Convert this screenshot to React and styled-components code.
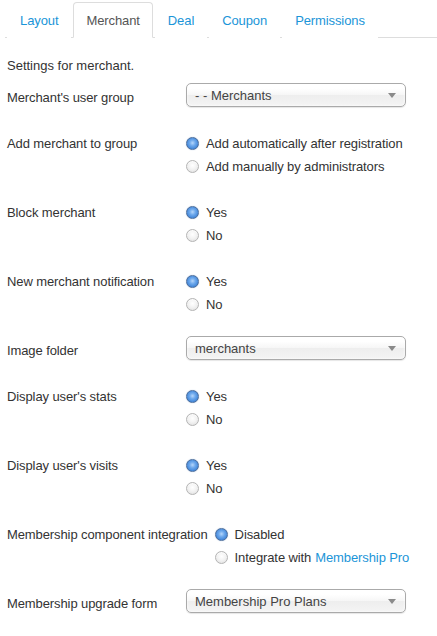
import React from "react";
import styled, { createGlobalStyle } from "styled-components";

const Global = createGlobalStyle`
  html, body { margin: 0; padding: 0; background: #fff; }
  body {
    font-family: "Liberation Sans", Arial, Helvetica, sans-serif;
    font-size: 13px;
    color: #333;
  }
`;

const Page = styled.div`
  width: 437px;
  overflow: hidden;
`;

const Tabs = styled.ul`
  display: flex;
  list-style: none;
  margin: 2px 0 0 5px;
  padding: 0 0 0 2px;
  border-bottom: 1px solid #ddd;
`;

const TabItem = styled.li`
  margin: 0 2px -1px 0;
`;

const TabLink = styled.a`
  display: block;
  padding: 9px 12px 7px;
  line-height: 18px;
  border: 1px solid ${(p) => (p.$active ? "#ddd" : "transparent")};
  border-bottom-color: ${(p) => (p.$active ? "#fff" : "transparent")};
  border-radius: 4px 4px 0 0;
  background: #fff;
  color: ${(p) => (p.$active ? "#555" : "#1b95d8")};
  text-decoration: none;
  letter-spacing: -0.1px;
  cursor: pointer;
`;

const Content = styled.div`
  padding: 16px 0 0 7px;
`;

const Intro = styled.p`
  margin: 0 0 9px;
  line-height: 23px;
`;

const Row = styled.div`
  display: flex;
  align-items: flex-start;
  margin-bottom: 23px;
`;

const Label = styled.div`
  flex: 0 0 auto;
  min-width: 172px;
  padding-right: 7px;
  line-height: 23px;
  white-space: nowrap;
  letter-spacing: -0.1px;
`;

const Controls = styled.div`
  display: flex;
  flex-direction: column;
`;

const SelectBox = styled.div`
  box-sizing: border-box;
  width: 220px;
  height: 24px;
  margin-top: -3px;
  display: flex;
  align-items: center;
  justify-content: space-between;
  padding: 2px 9px 0 8px;
  border: 1px solid #aaa;
  border-radius: 5px;
  background: linear-gradient(#fff 20%, #f6f6f6 50%, #eee 52%, #f4f4f4 100%);
  box-shadow: inset 0 0 3px #fff, 0 1px 1px rgba(0, 0, 0, 0.1);
  color: #444;
  line-height: 20px;
`;

const Caret = styled.span`
  width: 0;
  height: 0;
  margin-top: -2px;
  border-left: 4px solid transparent;
  border-right: 4px solid transparent;
  border-top: 5px solid #8a8a8a;
`;

const Option = styled.label`
  display: flex;
  align-items: center;
  line-height: 23px;
  height: 23px;
  letter-spacing: -0.1px;
`;

const RadioDot = styled.span`
  box-sizing: border-box;
  width: 13px;
  height: 13px;
  border-radius: 50%;
  margin-right: 7px;
  flex: 0 0 auto;
  border: 1px solid ${(p) => (p.$checked ? "#4c6e9c" : "#b4b4b4")};
  background: ${(p) =>
    p.$checked
      ? "radial-gradient(circle at 50% 45%, #b5d6fb 0%, #6ea9ec 35%, #3f84d8 75%, #2f6bbd 100%)"
      : "radial-gradient(circle at 50% 40%, #ffffff 0%, #f3f3f3 45%, #dcdcdc 100%)"};
  box-shadow: ${(p) =>
    p.$checked ? "0 0 1px rgba(60,110,180,0.5)" : "inset 0 1px 1px rgba(255,255,255,0.8)"};
`;

const Link = styled.a`
  color: #1b95d8;
  text-decoration: none;
  margin-left: 4px;
`;

const Select = ({ value }) => (
  <SelectBox>
    <span>{value}</span>
    <Caret />
  </SelectBox>
);

const Radios = ({ options }) => (
  <Controls>
    {options.map((o, i) => (
      <Option key={i}>
        <RadioDot $checked={i === 0} />
        {o}
      </Option>
    ))}
  </Controls>
);

const tabs = ["Layout", "Merchant", "Deal", "Coupon", "Permissions"];

export default function App() {
  return (
    <Page>
      <Global />
      <Tabs>
        {tabs.map((t) => (
          <TabItem key={t}>
            <TabLink $active={t === "Merchant"}>{t}</TabLink>
          </TabItem>
        ))}
      </Tabs>
      <Content>
        <Intro>Settings for merchant.</Intro>
        <Row>
          <Label>Merchant's user group</Label>
          <Select value="- - Merchants" />
        </Row>
        <Row>
          <Label>Add merchant to group</Label>
          <Radios
            options={["Add automatically after registration", "Add manually by administrators"]}
          />
        </Row>
        <Row>
          <Label>Block merchant</Label>
          <Radios options={["Yes", "No"]} />
        </Row>
        <Row>
          <Label>New merchant notification</Label>
          <Radios options={["Yes", "No"]} />
        </Row>
        <Row>
          <Label>Image folder</Label>
          <Select value="merchants" />
        </Row>
        <Row>
          <Label>Display user's stats</Label>
          <Radios options={["Yes", "No"]} />
        </Row>
        <Row>
          <Label>Display user's visits</Label>
          <Radios options={["Yes", "No"]} />
        </Row>
        <Row>
          <Label>Membership component integration</Label>
          <Radios
            options={[
              "Disabled",
              <>
                Integrate with<Link>Membership Pro</Link>
              </>,
            ]}
          />
        </Row>
        <Row>
          <Label>Membership upgrade form</Label>
          <Select value="Membership Pro Plans" />
        </Row>
      </Content>
    </Page>
  );
}
